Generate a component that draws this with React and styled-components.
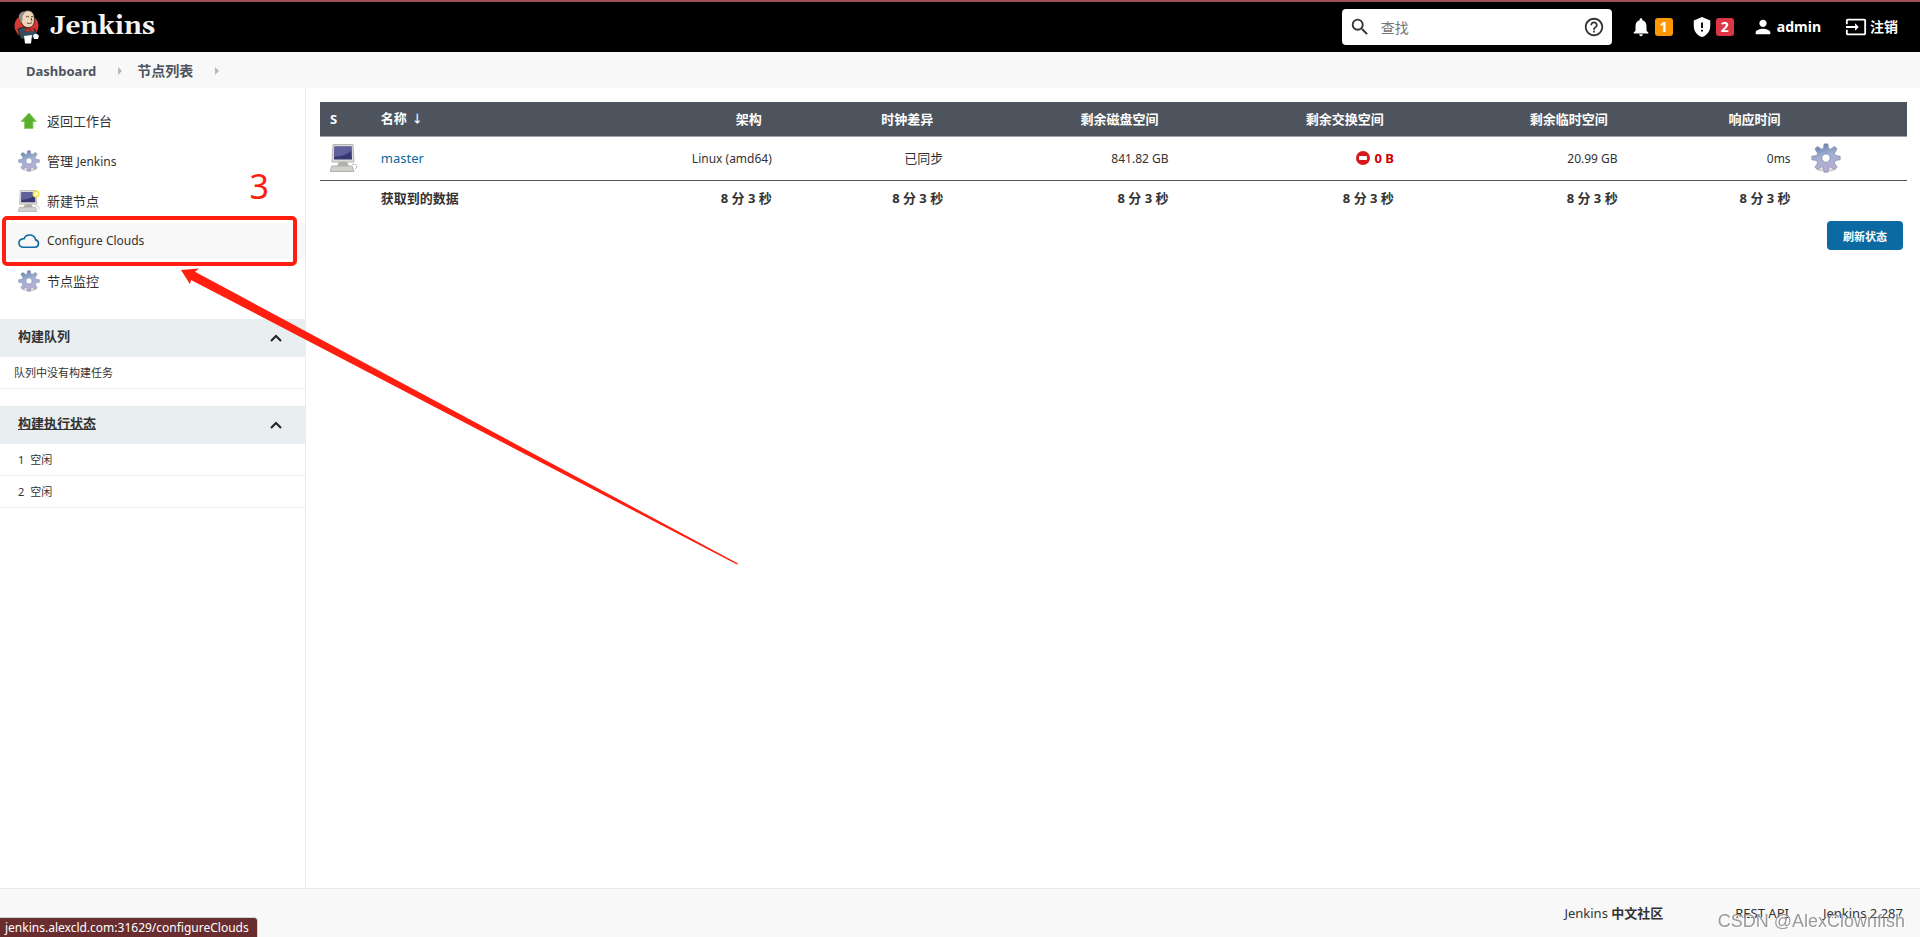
import React from 'react';
import styled, { createGlobalStyle, css } from 'styled-components';

const GlobalStyle = createGlobalStyle`
  * {
    box-sizing: border-box;
  }
  body {
    margin: 0;
    background: #fff;
    color: #333;
    font-family: 'Noto Sans', 'Noto Sans CJK SC', sans-serif;
    font-size: 13px;
    line-height: 18px;
  }
  a {
    color: inherit;
    text-decoration: none;
  }
`;

const Page = styled.div`
  display: flex;
  flex-direction: column;
  min-height: 100vh;
`;

const Latin = styled.span`
  font-size: 12px;
`;

const Header = styled.header`
  display: flex;
  align-items: center;
  height: 52px;
  padding: 0 22px 0 14px;
  border-top: 2px solid #9b5257;
  background: #000;
  color: #fff;
`;

const Logo = styled.a`
  display: flex;
  align-items: center;
  gap: 11px;
  margin-right: auto;
  font-family: Gelasio, 'DejaVu Serif', serif;
  font-size: 26px;
  font-weight: bold;
  line-height: 32px;
  color: #f3f3f3;
`;

const SearchBox = styled.label`
  display: flex;
  align-items: center;
  width: 270px;
  height: 36px;
  padding: 0 7px;
  border-radius: 4px;
  background: #fff;
  color: #333;
`;

const SearchInput = styled.input`
  flex: 1;
  min-width: 0;
  padding: 0 10px;
  border: 0;
  outline: 0;
  background: none;
  font-family: inherit;
  font-size: 14px;

  &::placeholder {
    color: #757575;
  }
`;

const HeaderLink = styled.a`
  display: flex;
  align-items: center;
  gap: 3px;
  margin-left: 18px;
  font-size: 14px;
  font-weight: bold;

  &:last-child {
    margin-left: 24px;
  }
`;

const Badge = styled.span`
  width: 18px;
  height: 18px;
  border-radius: 3px;
  background: ${({ $color }) => $color};
  font-size: 14px;
  line-height: 18px;
  text-align: center;
`;

const Breadcrumbs = styled.nav`
  display: flex;
  align-items: center;
  gap: 15px;
  height: 36px;
  padding: 1px 0 0 26px;
  background: #f8f8f8;
  color: #4d545d;
  font-size: 14px;
  font-weight: bold;
`;

const Crumb = styled.span`
  display: flex;
  align-items: center;
  gap: 22px;
  font-size: ${({ $latin }) => ($latin ? 13 : 14)}px;
`;

const Body = styled.div`
  display: flex;
  flex: 1;
`;

const Side = styled.aside`
  flex: none;
  width: 306px;
  padding-top: 15px;
  border-right: 1px solid #e9ebed;
`;

const Tasks = styled.nav`
  display: flex;
  flex-direction: column;
  gap: 4px;
  margin-bottom: 20px;
`;

const Task = styled.a`
  display: flex;
  align-items: center;
  gap: 7px;
  height: 36px;
  padding-left: 18px;
  background: ${({ $active }) => ($active ? '#f8f8f8' : 'none')};
`;

const Marked = styled.div`
  position: relative;
`;

const Frame = styled.div`
  position: absolute;
  inset: -7px 8px -7px 2px;
  border: 4px solid #ff1e10;
  border-radius: 5px;
  pointer-events: none;
`;

const StepNumber = styled.span`
  position: absolute;
  right: 36px;
  bottom: 53px;
  color: #ff1e10;
  font-size: 34px;
  line-height: 40px;
`;

const Pointer = styled.svg`
  position: absolute;
  left: 180px;
  top: 44px;
  z-index: 1;
  pointer-events: none;
`;

const Pane = styled.section`
  margin-bottom: 17px;
`;

const PaneHeader = styled.div`
  display: flex;
  align-items: center;
  justify-content: space-between;
  height: 38px;
  padding: 0 23px 0 18px;
  background: #e9eef1;
`;

const PaneTitle = styled.h2`
  margin: 0 0 4px;
  font-size: 13px;
  line-height: 20px;
  text-decoration: ${({ $underline }) => ($underline ? 'underline' : 'none')};
`;

const Collapse = styled.button`
  display: flex;
  padding: 0;
  border: 0;
  background: none;
  color: #222;
`;

const PaneRow = styled.div`
  display: flex;
  align-items: center;
  gap: 6px;
  height: 32px;
  padding-left: ${({ $indent }) => ($indent ? 18 : 14)}px;
  border-bottom: 1px solid #e9ebed;
  font-size: 11px;
`;

const Main = styled.main`
  flex: 1;
  min-width: 0;
  padding: 14px 13px 0 14px;
`;

const Table = styled.table`
  width: 100%;
  table-layout: fixed;
  border-collapse: collapse;
`;

const cell = css`
  padding: 0 10px;
  text-align: ${({ $left }) => ($left ? 'left' : 'right')};
`;

const Th = styled.th`
  ${cell}
  height: 34px;
  padding-right: 20px;
  border-bottom: 1px solid #98a1a9;
  background: #4d545d;
  color: #fff;
`;

const SortArrow = styled.span`
  margin-left: 5px;
  font-size: 11px;
`;

const Td = styled.td`
  ${cell}
  height: ${({ $total }) => ($total ? 35 : 44)}px;
  border-bottom: ${({ $total }) => ($total ? 0 : '1px solid #4d545d')};
  font-weight: ${({ $total }) => ($total ? 'bold' : 'normal')};

  a {
    color: #0b6aa2;
  }
  svg {
    display: block;
  }
`;

const Warning = styled.strong`
  display: flex;
  align-items: center;
  justify-content: flex-end;
  gap: 4px;
  color: #c00;
`;

const Actions = styled.div`
  display: flex;
  justify-content: flex-end;
  padding: 6px 4px 0;
`;

const Refresh = styled.button`
  height: 29px;
  padding: 0 16px;
  border: 0;
  border-radius: 4px;
  background: #0b6aa2;
  color: #fff;
  font-family: inherit;
  font-size: 11px;
  font-weight: bold;
`;

const Footer = styled.footer`
  display: flex;
  justify-content: flex-end;
  height: 49px;
  padding: 15px 17px 0;
  border-top: 1px solid #e3edee;
  background: #f8f8f8;
`;

const FooterLink = styled.a`
  margin-left: ${({ $gap }) => $gap || 0}px;
`;

const StatusUrl = styled.div`
  position: fixed;
  left: 0;
  bottom: 0;
  height: 20px;
  padding: 0 8px 0 5px;
  border: solid #d3d3d3;
  border-width: 1px 1px 0 0;
  border-radius: 0 4px 0 0;
  background: #692d2f;
  color: #fff;
  font-size: 12px;
  line-height: 20px;
`;

const Watermark = styled.div`
  position: fixed;
  right: 15px;
  bottom: 4px;
  color: rgba(130, 130, 130, 0.8);
  font-family: 'Liberation Sans', sans-serif;
  font-size: 18px;
  line-height: 24px;
  text-shadow: 1px 1px 0 #fff;
`;

const Butler = () => (
  <svg width="25" height="34" viewBox="0 0 25 34">
    <ellipse cx="12.5" cy="16" rx="12" ry="11.500" fill="#d33833" />
    <path d="M4 19L10 17L16 20L21 19L23 25L19 28L7 29Z" fill="#335061" stroke="#0b1820" strokeWidth="0.8" />
    <path d="M6 5Q9 .5 14 .5Q20.500 1 20.500 9Q20.500 17 15 17.500Q10 18 7.500 13Q5 9 6 5Z" fill="#f0d6b7" stroke="#221b1b" strokeWidth="0.8" />
    <path d="M9 1.500Q4 3 5 8L7 13L8.500 10V6L11 2.500Z" fill="#8d8d8d" />
    <path d="M12 7q1.500-1.500 3 0M17 7q1-1.500 2.500 0M13 13q2.500 1.500 5-.5M17 8l1 3" fill="none" stroke="#49372d" strokeWidth="0.9" />
    <path d="M12 18l4 2 4-2v4l-4-1-4 1z" fill="#d33833" stroke="#7b1816" strokeWidth="0.5" />
    <path d="M10 26l8-1-1 8.500h-6z" fill="#fff" />
    <path d="M19 25l3-1.500 3 2-1 3.500h-4z" fill="#f7f7f7" />
  </svg>
);

const Gear = ({ size }) => (
  <svg width={size} height={size} viewBox="0 0 24 24">
    <defs>
      <linearGradient id="steel" x1="0" y1="0" x2="0.3" y2="1">
        <stop offset="0" stopColor="#5578a4" />
        <stop offset="0.5" stopColor="#a3afd2" />
        <stop offset="1" stopColor="#b9add3" />
      </linearGradient>
    </defs>
    <ellipse cx="12" cy="21.500" rx="7" ry="1.500" fill="#d4d4d4" />
    <path
      fill="url(#steel)"
      stroke="#7f8bab"
      strokeWidth="0.6"
      fillRule="evenodd"
      d="M10.500 .7h3l.5 3.600 1.500.6 3.400-2.200 2 2-2.200 3.400.8 1.900 3.800.6v2.800l-3.800.6-.8 1.900 2.200 3.400-2 2-3.400-2.200-1.500.6-.5 3.600h-3l-.5-3.600-1.500-.6-3.400 2.200-2-2 2.200-3.400-.8-1.900L.7 13.400v-2.800l3.800-.6.8-1.900-2.200-3.400 2-2 3.400 2.200 1.500-.6zM12 8.700a3.300 3.300 0 1 0 0 6.600 3.300 3.300 0 1 0 0-6.600z"
    />
  </svg>
);

const Computer = ({ size, isNew }) => (
  <svg width={size} height={size} viewBox="0 0 28 28">
    <path d="M3 .5h20l1 17.500H2z" fill="#dcdcd8" stroke="#b4b4b0" />
    <path d="M4.500 2.500h17l.5 13H4z" fill="#383873" />
    <path d="M4.500 2.500h17l.2 4q-7 6-17.500 6z" fill="#5f5f9b" />
    <path d="M9 18h8l2 4H7z" fill="#b0b0ac" />
    <path d="M2 22h20l2 5.500H0z" fill="#d0d0cc" stroke="#b0b0ac" />
    <path d="M22 20.500q5-1 5 2.500l-2 2" fill="none" stroke="#bbb" />
    {isNew && <circle cx="23" cy="5" r="3.500" fill="#fffbd0" stroke="#f2e63a" strokeWidth="2" />}
  </svg>
);

const UpArrow = () => (
  <svg width="22" height="22" viewBox="0 0 22 22">
    <path d="M11 3L18.500 11.500H15V18.500H6.500V11.500H3Z" fill="#58b02c" stroke="#8ccf66" />
  </svg>
);

const Cloud = () => (
  <svg width="22" height="22" viewBox="0 0 22 22" fill="none" stroke="#0b6aa2" strokeWidth="1.600">
    <path d="M5.500 17.200H17a3.700 3.700 0 0 0 .6-7.300C17 6.700 14.500 5 11.500 5 9 5 7 6.300 6.200 8.600 3 8.700.9 10.500.9 13c0 2.500 2 4.200 4.600 4.200z" />
  </svg>
);

const Separator = () => (
  <svg width="4" height="8" viewBox="0 0 4 8">
    <path d="M0 0l4 4-4 4z" fill="#b5b8bb" />
  </svg>
);

const Chevron = () => (
  <svg width="12" height="8" viewBox="0 0 12 8" fill="none" stroke="currentColor" strokeWidth="2">
    <path d="M1 7l5-5 5 5" />
  </svg>
);

const Material = ({ d, size = 22 }) => (
  <svg width={size} height={size} viewBox="0 0 24 24" fill="currentColor">
    <path d={d} />
  </svg>
);

const columns = [
  { title: 'S', width: '3.2%', left: true },
  { title: '名称', width: '14%', left: true, sorted: true },
  { title: '架构', width: '11.9%', value: <Latin>Linux (amd64)</Latin> },
  { title: '时钟差异', width: '10.8%', value: '已同步' },
  { title: '剩余磁盘空间', width: '14.2%', value: <Latin>841.82 GB</Latin> },
  { title: '剩余交换空间', width: '14.2%', value: '0 B', low: true },
  { title: '剩余临时空间', width: '14.1%', value: <Latin>20.99 GB</Latin> },
  { title: '响应时间', width: '10.9%', value: <Latin>0ms</Latin> },
  { title: '', width: '6.7%' },
];
const monitors = columns.filter(({ value }) => value);

const LowSpace = ({ children }) => (
  <Warning>
    <svg width="14" height="14" viewBox="0 0 14 14">
      <circle cx="7" cy="7" r="7" fill="#d8191c" />
      <rect x="3" y="5" width="8" height="4" rx="1" fill="#fff" />
    </svg>
    {children}
  </Warning>
);

const App = () => (
  <Page>
    <GlobalStyle />
    <Header>
      <Logo href="#">
        <Butler />
        Jenkins
      </Logo>
      <SearchBox>
        <Material d="M15.500 14h-.79l-.28-.27A6.471 6.471 0 0 0 16 9.500 6.500 6.500 0 1 0 9.500 16c1.610 0 3.090-.59 4.230-1.570l.27.28v.79l5 4.990L20.490 19l-4.990-5zm-6 0C7.010 14 5 11.990 5 9.500S7.010 5 9.500 5 14 7.010 14 9.500 11.990 14 9.500 14z" />
        <SearchInput placeholder="查找" aria-label="查找" />
        <Material d="M11 18h2v-2h-2v2zm1-16C6.480 2 2 6.480 2 12s4.480 10 10 10 10-4.480 10-10S17.520 2 12 2zm0 18c-4.410 0-8-3.590-8-8s3.590-8 8-8 8 3.590 8 8-3.590 8-8 8zm0-14c-2.210 0-4 1.790-4 4h2c0-1.100.9-2 2-2s2 .9 2 2c0 2-3 1.750-3 5h2c0-2.250 3-2.500 3-5 0-2.210-1.790-4-4-4z" />
      </SearchBox>
      <HeaderLink href="#">
        <Material d="M12 22c1.100 0 2-.9 2-2h-4c0 1.100.89 2 2 2zm6-6v-5c0-3.070-1.640-5.640-4.500-6.320V4c0-.83-.67-1.500-1.500-1.500s-1.500.67-1.500 1.500v.68C7.630 5.360 6 7.920 6 11v5l-2 2v1h16v-1l-2-2z" />
        <Badge $color="#ff9800">1</Badge>
      </HeaderLink>
      <HeaderLink href="#">
        <Material d="M12 1L3 5v6c0 5.550 3.840 10.740 9 12 5.160-1.260 9-6.450 9-12V5l-9-4zm-1 6h2v6h-2V7zm0 8h2v2h-2v-2z" />
        <Badge $color="#dc3545">2</Badge>
      </HeaderLink>
      <HeaderLink href="#">
        <Material d="M12 12c2.210 0 4-1.790 4-4s-1.790-4-4-4-4 1.790-4 4 1.790 4 4 4zm0 2c-2.670 0-8 1.340-8 4v2h16v-2c0-2.660-5.330-4-8-4z" />
        admin
      </HeaderLink>
      <HeaderLink href="#">
        <Material d="M21 3.010H3c-1.100 0-2 .9-2 2V9h2V4.990h18v14.030H3V15H1v4.010c0 1.100.9 1.980 2 1.980h18c1.100 0 2-.88 2-1.980v-14c0-1.110-.9-2-2-2zM11 16l4-4-4-4v3H1v2h10v3z" />
        注销
      </HeaderLink>
    </Header>
    <Breadcrumbs>
      <Crumb $latin>
        <a href="#">Dashboard</a>
        <Separator />
      </Crumb>
      <Crumb>
        <a href="#">节点列表</a>
        <Separator />
      </Crumb>
    </Breadcrumbs>
    <Body>
      <Side>
        <Tasks>
          <Task href="#"><UpArrow />返回工作台</Task>
          <Task href="#"><Gear size={22} /><span>管理 <Latin>Jenkins</Latin></span></Task>
          <Task href="#"><Computer size={22} isNew />新建节点</Task>
          <Marked>
            <Task href="#" $active><Cloud /><Latin>Configure Clouds</Latin></Task>
            <Frame />
            <StepNumber>3</StepNumber>
            <Pointer width="560" height="300" viewBox="180 267 560 300">
              <path d="M181 270L199 268.500 195 271.700 738 563.500 737 564.500 191 280 190 284.300Z" fill="#ff1e10" />
            </Pointer>
          </Marked>
          <Task href="#"><Gear size={22} />节点监控</Task>
        </Tasks>
        <Pane>
          <PaneHeader>
            <PaneTitle>构建队列</PaneTitle>
            <Collapse aria-label="构建队列"><Chevron /></Collapse>
          </PaneHeader>
          <PaneRow>队列中没有构建任务</PaneRow>
        </Pane>
        <Pane>
          <PaneHeader>
            <PaneTitle $underline><a href="#">构建执行状态</a></PaneTitle>
            <Collapse aria-label="构建执行状态"><Chevron /></Collapse>
          </PaneHeader>
          {[1, 2].map((n) => (
            <PaneRow key={n} $indent>
              <span>{n}</span>
              <span>空闲</span>
            </PaneRow>
          ))}
        </Pane>
      </Side>
      <Main>
        <Table>
          <colgroup>
            {columns.map(({ width }, i) => <col key={i} width={width} />)}
          </colgroup>
          <thead>
            <tr>
              {columns.map(({ title, left, sorted }, i) => (
                <Th key={i} $left={left}>
                  {title}
                  {sorted && <SortArrow>↓</SortArrow>}
                </Th>
              ))}
            </tr>
          </thead>
          <tbody>
            <tr>
              <Td $left><Computer size={28} /></Td>
              <Td $left><a href="#">master</a></Td>
              {monitors.map(({ title, value, low }) => (
                <Td key={title}>{low ? <LowSpace>{value}</LowSpace> : value}</Td>
              ))}
              <Td $left><a href="#" aria-label="master"><Gear size={30} /></a></Td>
            </tr>
            <tr>
              <Td $total />
              <Td $total $left>获取到的数据</Td>
              {monitors.map(({ title }) => <Td key={title} $total>8 分 3 秒</Td>)}
              <Td $total />
            </tr>
          </tbody>
        </Table>
        <Actions>
          <Refresh>刷新状态</Refresh>
        </Actions>
      </Main>
    </Body>
    <Footer>
      <FooterLink href="#">Jenkins <b>中文社区</b></FooterLink>
      <FooterLink href="#" $gap={72}>REST API</FooterLink>
      <FooterLink href="#" $gap={34}>Jenkins 2.287</FooterLink>
    </Footer>
    <StatusUrl>jenkins.alexcld.com:31629/configureClouds</StatusUrl>
    <Watermark>CSDN @AlexClownfish</Watermark>
  </Page>
);

export default App;
